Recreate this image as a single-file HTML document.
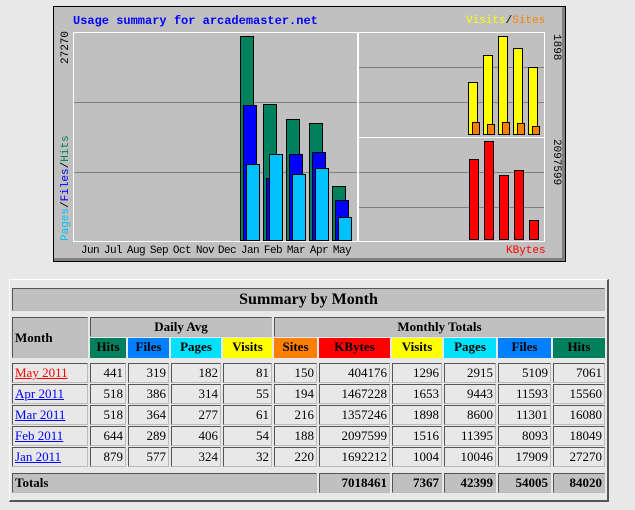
<!DOCTYPE html>
<html><head><meta charset="utf-8"><style>
body{margin:0;width:635px;height:510px;background:#e8e8e8;position:relative;overflow:hidden;font-family:"Liberation Serif",serif}
.a{position:absolute}
.chart{left:53px;top:6px;width:511px;height:254px;border:1px solid #000;background:#c0c0c0;box-shadow:inset -3px -3px 0 #808080}
.plot{position:absolute;border:1px solid #fff;background:#c0c0c0;box-sizing:border-box}
.g{position:absolute;height:1px;background:#808080}
.b{position:absolute;border:1px solid #000;box-sizing:border-box}
.m{font-family:"Liberation Mono",monospace;font-size:11px}
.ml{position:absolute;top:245px;width:24px;text-align:center;font-family:"Liberation Mono",monospace;font-size:11px;letter-spacing:-0.5px}
.row{position:absolute;left:12px;display:flex;gap:2px}
.c{box-sizing:border-box;border:1px solid #555;border-right-color:#bbb;border-bottom-color:#bbb;background:#e8e8e8;font-size:13px;text-align:right;padding:0 2px;line-height:18px;height:20px}
.h{background:#c0c0c0;font-weight:bold;text-align:center}
a{color:#00f}
</style></head><body>
<div class="a chart"></div>
<div class="a m" style="left:73px;top:14px;color:#00f;font-size:12px;font-weight:bold">Usage summary for arcademaster.net</div>
<div class="a m" style="left:466px;top:15px;font-size:11px"><span style="color:#ff0">Visits</span>/<span style="color:#ff8000">Sites</span></div>
<div class="plot" style="left:73px;top:32px;width:285px;height:210px"></div>
<div class="plot" style="left:358px;top:32px;width:187px;height:106px"></div>
<div class="plot" style="left:358px;top:137px;width:187px;height:105px"></div>
<div class="g" style="left:74px;top:102px;width:283px"></div>
<div class="g" style="left:74px;top:172px;width:283px"></div>
<div class="g" style="left:359px;top:67px;width:185px"></div>
<div class="g" style="left:359px;top:102px;width:185px"></div>
<div class="g" style="left:359px;top:172px;width:185px"></div>
<div class="g" style="left:359px;top:207px;width:185px"></div>
<div class="b" style="left:240px;top:36px;width:14px;height:205px;background:#00805c"></div>
<div class="b" style="left:243px;top:105px;width:14px;height:136px;background:#0000ff"></div>
<div class="b" style="left:246px;top:164px;width:14px;height:77px;background:#00c0ff"></div>
<div class="b" style="left:263px;top:104px;width:14px;height:137px;background:#00805c"></div>
<div class="b" style="left:266px;top:178px;width:14px;height:63px;background:#0000ff"></div>
<div class="b" style="left:269px;top:154px;width:14px;height:87px;background:#00c0ff"></div>
<div class="b" style="left:286px;top:119px;width:14px;height:122px;background:#00805c"></div>
<div class="b" style="left:289px;top:154px;width:14px;height:87px;background:#0000ff"></div>
<div class="b" style="left:292px;top:174px;width:14px;height:67px;background:#00c0ff"></div>
<div class="b" style="left:309px;top:123px;width:14px;height:118px;background:#00805c"></div>
<div class="b" style="left:312px;top:152px;width:14px;height:89px;background:#0000ff"></div>
<div class="b" style="left:315px;top:168px;width:14px;height:73px;background:#00c0ff"></div>
<div class="b" style="left:332px;top:186px;width:14px;height:55px;background:#00805c"></div>
<div class="b" style="left:335px;top:200px;width:14px;height:41px;background:#0000ff"></div>
<div class="b" style="left:338px;top:217px;width:14px;height:24px;background:#00c0ff"></div>
<div class="b" style="left:468px;top:82px;width:10px;height:53px;background:#ff0"></div>
<div class="b" style="left:483px;top:55px;width:10px;height:80px;background:#ff0"></div>
<div class="b" style="left:498px;top:36px;width:10px;height:99px;background:#ff0"></div>
<div class="b" style="left:513px;top:48px;width:10px;height:87px;background:#ff0"></div>
<div class="b" style="left:528px;top:67px;width:10px;height:68px;background:#ff0"></div>
<div class="b" style="left:472px;top:122px;width:8px;height:13px;background:#ff8000"></div>
<div class="b" style="left:487px;top:124px;width:8px;height:11px;background:#ff8000"></div>
<div class="b" style="left:502px;top:122px;width:8px;height:13px;background:#ff8000"></div>
<div class="b" style="left:517px;top:123px;width:8px;height:12px;background:#ff8000"></div>
<div class="b" style="left:532px;top:126px;width:8px;height:9px;background:#ff8000"></div>
<div class="b" style="left:469px;top:159px;width:10px;height:81px;background:#f00"></div>
<div class="b" style="left:484px;top:141px;width:10px;height:99px;background:#f00"></div>
<div class="b" style="left:499px;top:175px;width:10px;height:65px;background:#f00"></div>
<div class="b" style="left:514px;top:170px;width:10px;height:70px;background:#f00"></div>
<div class="b" style="left:529px;top:220px;width:10px;height:20px;background:#f00"></div>
<div class="ml" style="left:78px">Jun</div>
<div class="ml" style="left:101px">Jul</div>
<div class="ml" style="left:124px">Aug</div>
<div class="ml" style="left:147px">Sep</div>
<div class="ml" style="left:170px">Oct</div>
<div class="ml" style="left:193px">Nov</div>
<div class="ml" style="left:215px">Dec</div>
<div class="ml" style="left:238px">Jan</div>
<div class="ml" style="left:261px">Feb</div>
<div class="ml" style="left:284px">Mar</div>
<div class="ml" style="left:307px">Apr</div>
<div class="ml" style="left:330px">May</div>
<div class="a m" style="left:506px;top:245px;color:#f00">KBytes</div>
<div class="a m" style="left:60px;top:64px;transform:rotate(-90deg);transform-origin:0 0">27270</div>
<div class="a m" style="left:60px;top:241px;transform:rotate(-90deg);transform-origin:0 0;white-space:nowrap"><span style="color:#00c0ff">Pages</span>/<span style="color:#0000ff">Files</span>/<span style="color:#00805c">Hits</span></div>
<div class="a m" style="left:562px;top:34px;transform:rotate(90deg);transform-origin:0 0">1898</div>
<div class="a m" style="left:562px;top:139px;transform:rotate(90deg);transform-origin:0 0">2097599</div>

<div class="a" style="left:9px;top:279px;width:597px;height:220px;border-top:1px solid #fff;border-left:1px solid #fff;border-right:2px solid #555;border-bottom:2px solid #555"></div>
<div class="row" style="top:288px"><div class="c h" style="width:593px;height:23px;font-size:16px;line-height:21px">Summary by Month</div></div>
<div class="a c h" style="left:12px;top:317px;width:76px;height:41px;line-height:39px;text-align:left">Month</div>
<div class="a c h" style="left:90px;top:317px;width:182px;height:20px">Daily Avg</div>
<div class="a c h" style="left:274px;top:317px;width:331px;height:20px">Monthly Totals</div>
<div class="row" style="top:338px;left:90px">
<div class="c h" style="width:36px;background:#00805c;border:0">Hits</div>
<div class="c h" style="width:41px;background:#0080ff;border:0">Files</div>
<div class="c h" style="width:50px;background:#00e0ff;border:0">Pages</div>
<div class="c h" style="width:49px;background:#ff0;border:0">Visits</div>
<div class="c h" style="width:43px;background:#ff8000;border:0">Sites</div>
<div class="c h" style="width:71px;background:#f00;border:0">KBytes</div>
<div class="c h" style="width:50px;background:#ff0;border:0">Visits</div>
<div class="c h" style="width:52px;background:#00e0ff;border:0">Pages</div>
<div class="c h" style="width:53px;background:#0080ff;border:0">Files</div>
<div class="c h" style="width:52px;background:#00805c;border:0">Hits</div>
</div>
<div class="row" style="top:363px"><div class="c" style="width:76px;text-align:left"><a style="color:#f00" href="#">May 2011</a></div><div class="c" style="width:36px">441</div><div class="c" style="width:41px">319</div><div class="c" style="width:50px">182</div><div class="c" style="width:49px">81</div><div class="c" style="width:43px">150</div><div class="c" style="width:71px">404176</div><div class="c" style="width:50px">1296</div><div class="c" style="width:52px">2915</div><div class="c" style="width:53px">5109</div><div class="c" style="width:52px">7061</div></div>
<div class="row" style="top:384px"><div class="c" style="width:76px;text-align:left"><a href="#">Apr 2011</a></div><div class="c" style="width:36px">518</div><div class="c" style="width:41px">386</div><div class="c" style="width:50px">314</div><div class="c" style="width:49px">55</div><div class="c" style="width:43px">194</div><div class="c" style="width:71px">1467228</div><div class="c" style="width:50px">1653</div><div class="c" style="width:52px">9443</div><div class="c" style="width:53px">11593</div><div class="c" style="width:52px">15560</div></div>
<div class="row" style="top:405px"><div class="c" style="width:76px;text-align:left"><a href="#">Mar 2011</a></div><div class="c" style="width:36px">518</div><div class="c" style="width:41px">364</div><div class="c" style="width:50px">277</div><div class="c" style="width:49px">61</div><div class="c" style="width:43px">216</div><div class="c" style="width:71px">1357246</div><div class="c" style="width:50px">1898</div><div class="c" style="width:52px">8600</div><div class="c" style="width:53px">11301</div><div class="c" style="width:52px">16080</div></div>
<div class="row" style="top:426px"><div class="c" style="width:76px;text-align:left"><a href="#">Feb 2011</a></div><div class="c" style="width:36px">644</div><div class="c" style="width:41px">289</div><div class="c" style="width:50px">406</div><div class="c" style="width:49px">54</div><div class="c" style="width:43px">188</div><div class="c" style="width:71px">2097599</div><div class="c" style="width:50px">1516</div><div class="c" style="width:52px">11395</div><div class="c" style="width:53px">8093</div><div class="c" style="width:52px">18049</div></div>
<div class="row" style="top:447px"><div class="c" style="width:76px;text-align:left"><a href="#">Jan 2011</a></div><div class="c" style="width:36px">879</div><div class="c" style="width:41px">577</div><div class="c" style="width:50px">324</div><div class="c" style="width:49px">32</div><div class="c" style="width:43px">220</div><div class="c" style="width:71px">1692212</div><div class="c" style="width:50px">1004</div><div class="c" style="width:52px">10046</div><div class="c" style="width:53px">17909</div><div class="c" style="width:52px">27270</div></div>
<div class="row" style="top:473px"><div class="c h" style="width:305px;text-align:left">Totals</div><div class="c h" style="width:71px;text-align:right">7018461</div><div class="c h" style="width:50px;text-align:right">7367</div><div class="c h" style="width:52px;text-align:right">42399</div><div class="c h" style="width:53px;text-align:right">54005</div><div class="c h" style="width:52px;text-align:right">84020</div></div>
</body></html>
